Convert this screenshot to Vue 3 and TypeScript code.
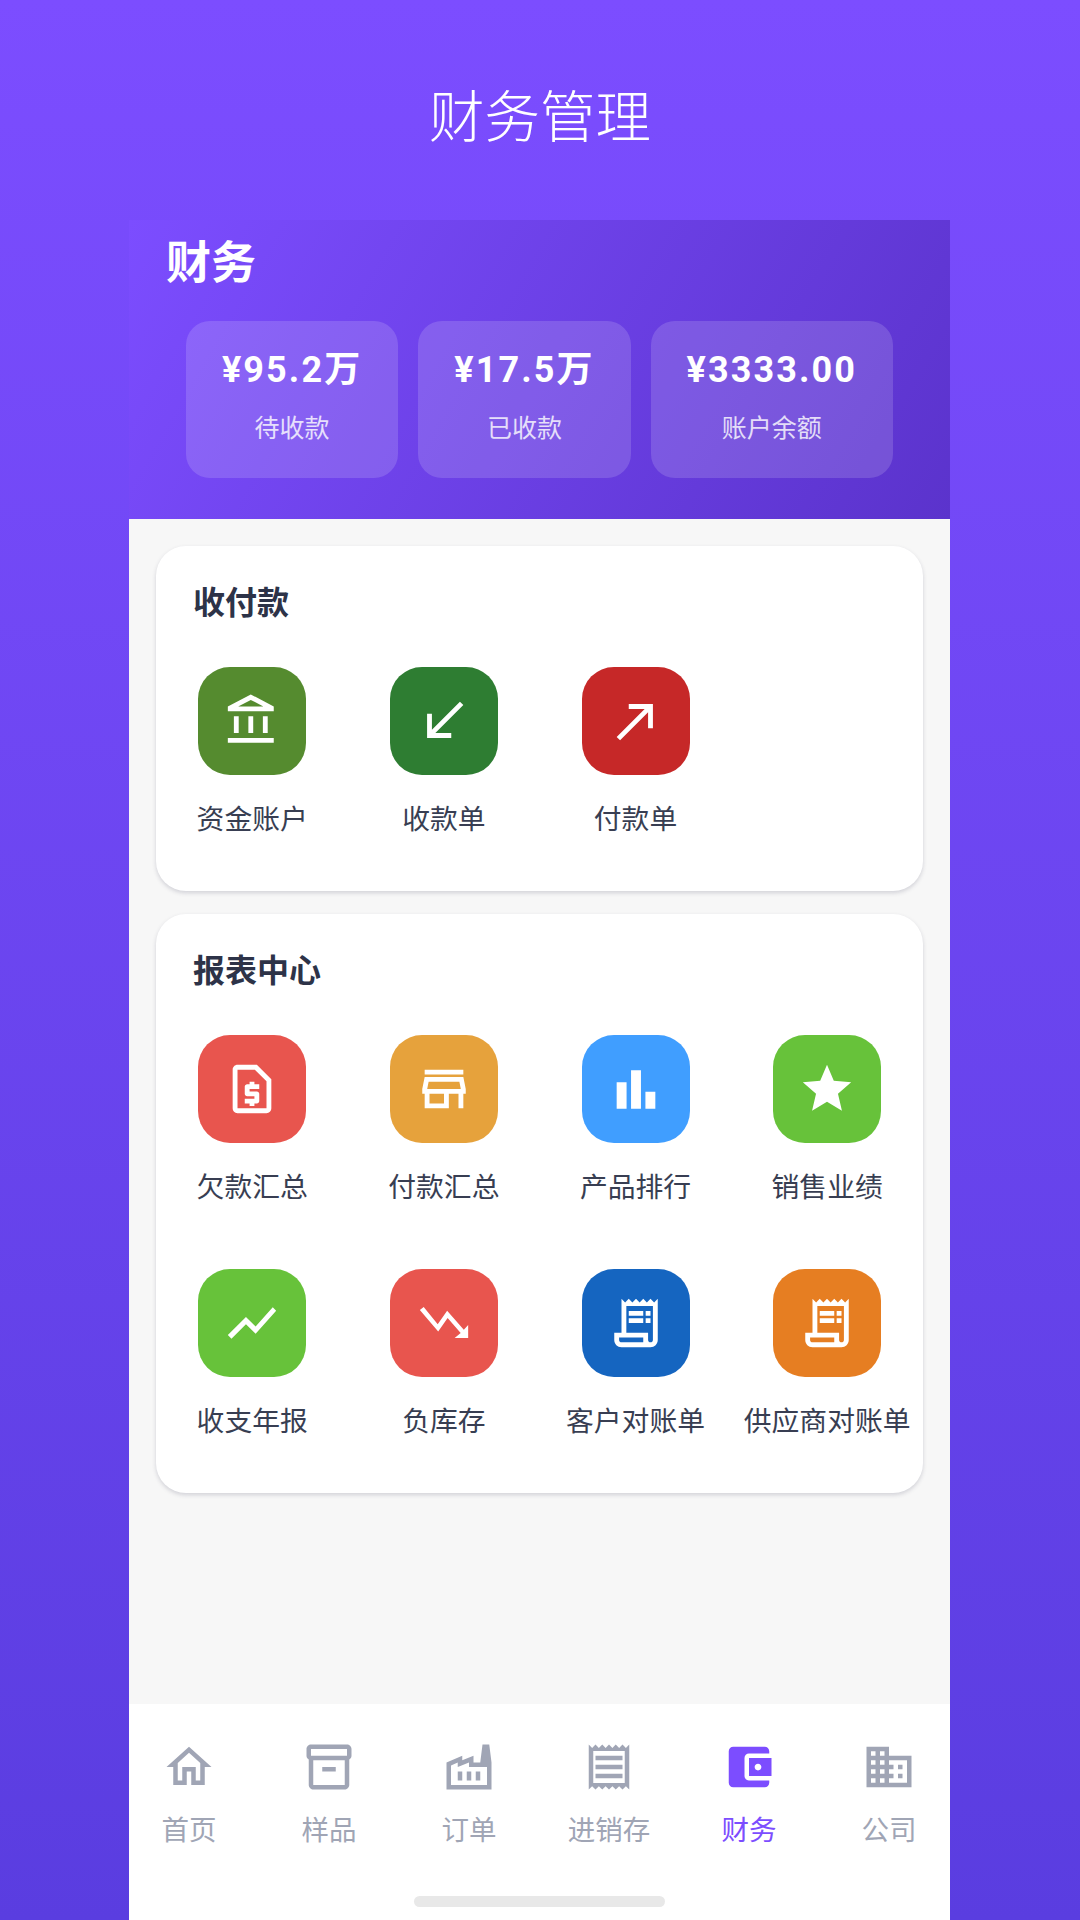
<script setup lang="ts">
interface Tile {
  label: string;
  color: string;
  paths: string[];
}

const stats = [
  { value: "¥95.2万", label: "待收款" },
  { value: "¥17.5万", label: "已收款" },
  { value: "¥3333.00", label: "账户余额" },
];

const receiptLong = [
  "M19.5 3.5L18 2l-1.5 1.5L15 2l-1.5 1.5L12 2l-1.5 1.5L9 2 7.5 3.5 6 2v14H3v3c0 1.66 1.34 3 3 3h12c1.66 0 3-1.34 3-3V2l-1.5 1.5zM15 20H6c-.55 0-1-.45-1-1v-1h10v2zm4-1c0 .55-.45 1-1 1s-1-.45-1-1v-3H8V5h11v14z",
  "M9 7h6v2H9zm7 0h2v2h-2zm-7 3h6v2H9zm7 0h2v2h-2z",
];

const payments: Tile[] = [
  {
    label: "资金账户",
    color: "#558b2f",
    paths: ["M6.5 10h-2v7h2v-7zm6 0h-2v7h2v-7zm8.5 9H2v2h19v-2zm-2.5-9h-2v7h2v-7zm-7-6.74L16.71 6H6.29l5.21-2.74m0-2.26L2 6v2h19V6l-9.5-5z"],
  },
  { label: "收款单", color: "#2e7d32", paths: ["M20 5.41L18.59 4 7 15.59V9H5v10h10v-2H8.41z"] },
  { label: "付款单", color: "#c62828", paths: ["M9 5v2h6.59L4 18.59 5.41 20 17 8.41V15h2V5z"] },
];

const reports: Tile[] = [
  {
    label: "欠款汇总",
    color: "#e8554e",
    paths: [
      "M14 2H6c-1.1 0-2 .9-2 2v16c0 1.1.89 2 1.99 2H18c1.1 0 2-.9 2-2V8l-6-6zm4 18H6V4h7.17L18 8.83V20z",
      "M11 19h2v-1h1c.55 0 1-.45 1-1v-3c0-.55-.45-1-1-1h-3v-1h4v-2h-2V9h-2v1h-1c-.55 0-1 .45-1 1v3c0 .55.45 1 1 1h3v1H9v2h2v1z",
    ],
  },
  {
    label: "付款汇总",
    color: "#e6a23c",
    paths: ["M18.36 9l.6 3H5.04l.6-3h12.72M20 4H4v2h16V4zm0 3H4l-1 5v2h1v6h10v-6h4v6h2v-6h1v-2l-1-5zM6 18v-4h6v4H6z"],
  },
  { label: "产品排行", color: "#409eff", paths: ["M4 9.2h4.1v11H4zM9.95 4.2h4.1v16H9.95zM15.9 13.1H20v7.1h-4.1z"] },
  {
    label: "销售业绩",
    color: "#67c23a",
    paths: ["M12 17.27L18.18 21l-1.64-7.03L22 9.24l-7.19-.61L12 2 9.19 8.63 2 9.24l5.46 4.73L5.82 21z"],
  },
  { label: "收支年报", color: "#67c23a", paths: ["M3.5 18.49l6-6.01 4 4L22 6.92l-1.41-1.41-7.09 7.97-4-4L2 16.99z"] },
  {
    label: "负库存",
    color: "#e8554e",
    paths: ["M3.6 5.4L2 6.6l7.6 8.9 3.9-5.6 5.4 6.2-2.5 2.1H22v-5.4l-1.8 2-6.9-7.9-3.9 5.6z"],
  },
  { label: "客户对账单", color: "#1565c0", paths: receiptLong },
  { label: "供应商对账单", color: "#e67e22", paths: receiptLong },
];

const sections = [
  { title: "收付款", tiles: payments },
  { title: "报表中心", tiles: reports },
];

const tabs = [
  {
    label: "首页",
    paths: ["M12 5.69l5 4.5V18h-2v-6H9v6H7v-7.81l5-4.5M12 3L2 12h3v8h6v-6h2v6h6v-8h3L12 3z"],
  },
  {
    label: "样品",
    paths: [
      "M20 2H4c-1 0-2 .9-2 2v3.01c0 .72.43 1.34 1 1.69V20c0 1.1 1.1 2 2 2h14c.9 0 2-.9 2-2V8.7c.57-.35 1-.97 1-1.69V4c0-1.1-1-2-2-2zm-1 18H5V9h14v11zm1-13H4V4h16v3z",
      "M9 12h6v2H9z",
    ],
  },
  {
    label: "订单",
    paths: ["M22 22H2V10l7-3v2l5-2v3h3l1-8h3l1 8v12zM12 9.95l-5 2V10l-3 1.32V20h16v-8h-8V9.95zM11 18h2v-4h-2v4zm-4 0h2v-4H7v4zm10-4h-2v4h2v-4z"],
  },
  {
    label: "进销存",
    paths: ["M19.5 3.5L18 2l-1.5 1.5L15 2l-1.5 1.5L12 2l-1.5 1.5L9 2 7.5 3.5 6 2 4.5 3.5 3 2v20l1.5-1.5L6 22l1.5-1.5L9 22l1.5-1.5L12 22l1.5-1.5L15 22l1.5-1.5L18 22l1.5-1.5L21 22V2l-1.5 1.5zM19 19.09H5V4.91h14v14.18zM6 15h12v2H6zm0-4h12v2H6zm0-4h12v2H6z"],
  },
  {
    label: "财务",
    active: true,
    paths: ["M21 18v1c0 1.1-.9 2-2 2H5c-1.11 0-2-.9-2-2V5c0-1.1.89-2 2-2h14c1.1 0 2 .9 2 2v1h-9c-1.11 0-2 .9-2 2v8c0 1.1.89 2 2 2h9zm-9-2h10V8H12v8zm4-2.5c-.83 0-1.5-.67-1.5-1.5s.67-1.5 1.5-1.5 1.5.67 1.5 1.5-.67 1.5-1.5 1.5z"],
  },
  {
    label: "公司",
    paths: ["M12 7V3H2v18h20V7H12zM6 19H4v-2h2v2zm0-4H4v-2h2v2zm0-4H4V9h2v2zm0-4H4V5h2v2zm4 12H8v-2h2v2zm0-4H8v-2h2v2zm0-4H8V9h2v2zm0-4H8V5h2v2zm10 12h-8v-2h2v-2h-2v-2h2v-2h-2V9h8v10zm-2-8h-2v2h2v-2zm0 4h-2v2h2v-2z"],
  },
];
</script>

<template>
  <div class="page">
    <header class="page-title">财务管理</header>

    <div class="phone">
      <section class="hero">
        <h2>财务</h2>
        <div class="stats">
          <div v-for="s in stats" :key="s.label" class="stat">
            <span class="stat-value">{{ s.value }}</span>
            <span class="stat-label">{{ s.label }}</span>
          </div>
        </div>
      </section>

      <main class="content">
        <section v-for="sec in sections" :key="sec.title" class="card">
          <h3>{{ sec.title }}</h3>
          <div class="tiles">
            <div v-for="t in sec.tiles" :key="t.label" class="tile">
              <span class="tile-icon" :style="{ background: t.color }">
                <svg viewBox="0 0 24 24" width="58" height="58" fill="#fff">
                  <path v-for="d in t.paths" :key="d" :d="d" />
                </svg>
              </span>
              <span class="tile-label">{{ t.label }}</span>
            </div>
          </div>
        </section>
      </main>

      <nav class="tabbar">
        <div class="tabs">
          <div v-for="tab in tabs" :key="tab.label" class="tab" :class="{ active: tab.active }">
            <svg viewBox="0 0 24 24" width="54" height="54" fill="currentColor">
              <path v-for="d in tab.paths" :key="d" :d="d" />
            </svg>
            <span>{{ tab.label }}</span>
          </div>
        </div>
        <div class="home-bar"></div>
      </nav>
    </div>
  </div>
</template>

<style>
html,
body {
  margin: 0;
  padding: 0;
}
</style>

<style scoped>
.page {
  display: flex;
  flex-direction: column;
  align-items: center;
  height: 1920px;
  overflow: hidden;
  background: linear-gradient(180deg, #7c4dff 0%, #5a3de0 100%);
  font-family: "Noto Sans CJK SC", "Noto Sans", sans-serif;
}
.page-title {
  height: 220px;
  padding-top: 73px;
  box-sizing: border-box;
  color: #fff;
  font-size: 55.5px;
  font-weight: 300;
  line-height: 80px;
}
.phone {
  flex: 1;
  width: 821px;
  margin-right: 1px;
  display: flex;
  flex-direction: column;
  min-height: 0;
}
.hero {
  height: 299px;
  box-sizing: border-box;
  padding: 11px 37px 0;
  background: linear-gradient(120deg, #7c4dff 0%, #5b33cc 100%);
  color: #fff;
}
.hero h2 {
  margin: 0;
  font-size: 45px;
  font-weight: 700;
  line-height: 58px;
}
.stats {
  display: flex;
  justify-content: center;
  gap: 20px;
  margin-top: 32px;
}
.stat {
  display: flex;
  flex-direction: column;
  align-items: center;
  height: 157px;
  padding: 0 36px;
  border-radius: 24px;
  background: rgba(255, 255, 255, 0.15);
}
.stat-value {
  margin-top: 24px;
  font-family: Roboto, "Noto Sans CJK SC", sans-serif;
  font-size: 36px;
  font-weight: 700;
  line-height: 50px;
  letter-spacing: 2.1px;
}
.stat-label {
  margin-top: 13px;
  font-size: 25px;
  line-height: 36px;
  opacity: 0.8;
}
.content {
  flex: 1;
  display: flex;
  flex-direction: column;
  gap: 23px;
  padding: 27px;
  background: #f7f7f7;
}
.card {
  padding-bottom: 55px;
  border-radius: 30px;
  background: #fff;
  box-shadow: 0 2px 4px rgba(60, 60, 90, 0.2);
}
.card h3 {
  margin: 0;
  padding: 31px 37px 0;
  color: #2d3348;
  font-size: 32px;
  font-weight: 700;
  line-height: 46px;
}
.tiles {
  display: grid;
  grid-template-columns: repeat(4, 1fr);
  row-gap: 65px;
  margin-top: 44px;
  padding-left: 0.4px;
}
.tile {
  display: flex;
  flex-direction: column;
  align-items: center;
  gap: 23px;
}
.tile-icon {
  display: flex;
  align-items: center;
  justify-content: center;
  width: 108px;
  height: 108px;
  border-radius: 32px;
}
.tile-label {
  color: #383e52;
  font-size: 27.8px;
  line-height: 38px;
  white-space: nowrap;
}
.tabbar {
  height: 216px;
  box-sizing: border-box;
  padding: 36px 11px 0 10px;
  background: #fff;
  position: relative;
}
.tabs {
  display: flex;
  justify-content: space-between;
}
.tab {
  width: 100px;
  display: flex;
  flex-direction: column;
  align-items: center;
  gap: 14px;
  color: #a0a5b5;
  font-size: 27.5px;
  line-height: 40px;
}
.tab.active {
  color: #7c4dff;
}
.home-bar {
  position: absolute;
  left: 285px;
  bottom: 13px;
  width: 251px;
  height: 11px;
  border-radius: 6px;
  background: #e8e8e8;
}
</style>
